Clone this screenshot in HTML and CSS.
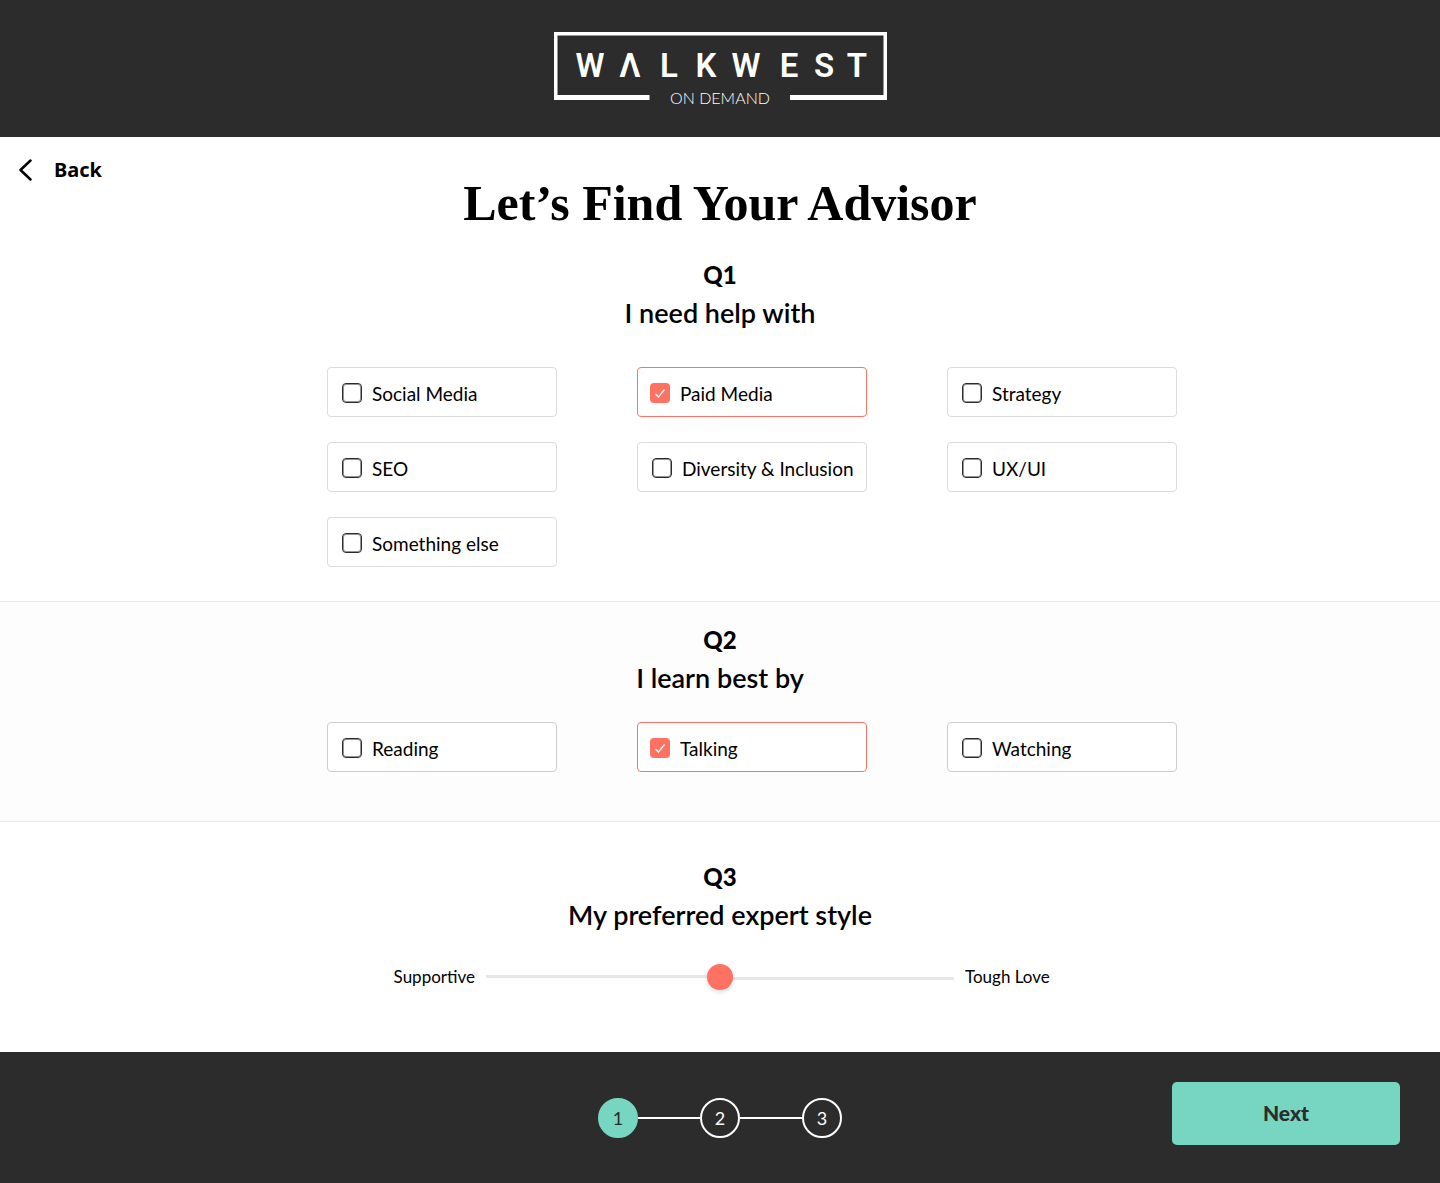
FILE: index.html
```html
<!DOCTYPE html>
<html lang="en">
<head>
<meta charset="utf-8">
<title>Walk West On Demand - Find Your Advisor</title>
<meta name="viewport" content="width=device-width">
<link rel="stylesheet" href="styles.css">
</head>
<body>
<header class="header">
  <svg class="logo" width="333" height="74" viewBox="0 0 333 74" role="img" aria-label="Walk West On Demand">
    <path d="M0 0H333V68H236V63H329.500V3.500H3.500V63H95.500V68H0Z" fill="#fff"/>
    <text class="logo-name" y="45" x="36 76 115 152 192 235 270 303">WΛLKWEST</text>
    <text class="logo-tag" y="72" x="166">ON DEMAND</text>
  </svg>
</header>

<form class="quiz">
  <section class="question">
    <div class="intro">
      <a class="back" href="#">
        <svg width="14" height="22" viewBox="0 0 14 22" aria-hidden="true">
          <path d="M11.500 1.500L1.500 11L11.500 20.500" fill="none" stroke="#000" stroke-width="2.500" stroke-linecap="round" stroke-linejoin="round"/>
        </svg>
        Back
      </a>
      <h1 class="title">Let’s Find Your Advisor</h1>
    </div>
    <h2 class="number">Q1</h2>
    <p class="prompt">I need help with</p>
    <div class="options">
      <label class="option"><input type="checkbox" name="help">Social Media</label>
      <label class="option"><input type="checkbox" name="help" checked>Paid Media</label>
      <label class="option"><input type="checkbox" name="help">Strategy</label>
      <label class="option"><input type="checkbox" name="help">SEO</label>
      <label class="option"><input type="checkbox" name="help">Diversity &amp; Inclusion</label>
      <label class="option"><input type="checkbox" name="help">UX/UI</label>
      <label class="option"><input type="checkbox" name="help">Something else</label>
    </div>
  </section>

  <section class="question question-alt">
    <h2 class="number">Q2</h2>
    <p class="prompt">I learn best by</p>
    <div class="options">
      <label class="option"><input type="checkbox" name="learn">Reading</label>
      <label class="option"><input type="checkbox" name="learn" checked>Talking</label>
      <label class="option"><input type="checkbox" name="learn">Watching</label>
    </div>
  </section>

  <section class="question question-style">
    <h2 class="number">Q3</h2>
    <p class="prompt" id="style-prompt">My preferred expert style</p>
    <div class="scale">
      <label class="scale-low" for="style">Supportive</label>
      <input class="slider" type="range" id="style" min="0" max="100" value="50" aria-labelledby="style-prompt">
      <label for="style">Tough Love</label>
    </div>
  </section>

  <footer class="footer">
    <ol class="steps">
      <li class="step step-active">1</li>
      <li class="step">2</li>
      <li class="step">3</li>
    </ol>
    <button class="next" type="submit">Next</button>
  </footer>
</form>
</body>
</html>
```
FILE: styles.css
```css
* {
  box-sizing: border-box;
}
body {
  margin: 0;
  font-family: Lato, "Open Sans", sans-serif;
  font-size: 19px;
  color: #000;
  background: #fff;
}
h1, h2, p, ol {
  margin: 0;
  padding: 0;
}

/* header */
.header {
  display: flex;
  justify-content: center;
  padding: 32px 20px 31px;
  background: #2c2c2c;
}
.logo {
  display: block;
}
.logo-name, .logo-tag {
  fill: #fff;
  text-anchor: middle;
}
.logo-name {
  font-family: Roboto, sans-serif;
  font-size: 33px;
  font-weight: 600;
}
.logo-tag {
  font-size: 16px;
  font-weight: 300;
}

/* questions */
.intro {
  display: grid;
  grid-template-columns: 1fr auto 1fr;
  align-items: start;
  padding: 18px 19px 0;
}
.back {
  display: flex;
  align-items: center;
  justify-self: start;
  gap: 21px;
  font-family: "Noto Sans", sans-serif;
  font-size: 20px;
  font-weight: 700;
  line-height: 30px;
  color: #000;
  text-decoration: none;
}
.title {
  padding-top: 18px;
  font-family: "Liberation Serif", serif;
  font-size: 50px;
  font-weight: 700;
  line-height: 60px;
}
.question {
  padding-bottom: 34px;
  border-bottom: 1px solid #e9e9e9;
}
.question-alt {
  padding: 20px 0 49px;
  background: #fdfdfd;
}
.question-style {
  padding: 37px 0 60px;
  border-bottom: 0;
}
.number {
  font-size: 24px;
  font-weight: 900;
  line-height: 36px;
  text-align: center;
}
.intro + .number {
  margin-top: 24px;
}
.prompt {
  font-size: 27px;
  font-weight: 600;
  line-height: 40px;
  text-align: center;
}
.options {
  display: grid;
  grid-template-columns: repeat(3, 1fr);
  gap: 25px 80px;
  max-width: 914px;
  margin: 24px auto 0;
  padding-left: 64px;
}
.intro ~ .options {
  margin-top: 34px;
}
.option {
  display: flex;
  align-items: center;
  gap: 10px;
  height: 50px;
  padding: 2px 8px 0 14px;
  border: 1px solid #dcdcdc;
  border-radius: 4px;
  background: #fff;
  white-space: nowrap;
}
.question-alt .option {
  border-color: #cecece;
}
.option input {
  appearance: none;
  flex: none;
  width: 20px;
  height: 20px;
  margin: 0;
  border: 1px solid #2c2c2c;
  border-radius: 4px;
  box-shadow: inset 0 0 0 1px #959595;
}
.option:has(:checked), .question-alt .option:has(:checked) {
  padding-left: 12px;
  border-color: #ff7262;
}
.option input:checked {
  border: 0;
  background: #ff7262 url("data:image/svg+xml,%3Csvg xmlns='http://www.w3.org/2000/svg' viewBox='0 0 20 20'%3E%3Cpath d='M5.5 11L8.500 14L14.500 6.500' fill='none' stroke='white' stroke-width='1.300'/%3E%3C/svg%3E") center / 20px;
  box-shadow: none;
}

/* slider */
.scale {
  display: grid;
  grid-template-columns: 1fr minmax(120px, 468px) 1fr;
  align-items: center;
  gap: 11px;
  margin-top: 27px;
  font-size: 17px;
  line-height: 28px;
}
.scale-low {
  text-align: right;
}
.slider {
  appearance: none;
  width: 100%;
  height: 30px;
  margin: 0;
  background: none;
}
.slider::-webkit-slider-runnable-track {
  height: 26px;
  background:
    linear-gradient(#e7e7e7, #e7e7e7) 0 11px / 50% 3px no-repeat,
    linear-gradient(#e7e7e7, #e7e7e7) 100% 13px / 50% 3px no-repeat;
}
.slider::-webkit-slider-thumb {
  appearance: none;
  width: 26px;
  height: 26px;
  border-radius: 50%;
  background: #ff7262;
  box-shadow: 0 2px 4px rgba(0, 0, 0, 0.15);
}

/* footer */
.footer {
  display: grid;
  grid-template-columns: 1fr auto 1fr;
  align-items: start;
  padding: 30px 40px 38px;
  background: #2c2c2c;
}
.steps {
  grid-column: 2;
  display: flex;
  gap: 62px;
  padding-top: 16px;
  list-style: none;
}
.step {
  position: relative;
  width: 40px;
  height: 40px;
  border: 2px solid #fff;
  border-radius: 50%;
  color: #fff;
  font-size: 18px;
  line-height: 37px;
  text-align: center;
}
.step + .step::before {
  content: "";
  position: absolute;
  top: 17px;
  right: 38px;
  width: 62px;
  height: 2px;
  background: #fff;
}
.step-active {
  border-color: #76d6c1;
  background: #76d6c1;
  color: #2c2c2c;
}
.next {
  justify-self: end;
  width: 228px;
  height: 63px;
  padding-bottom: 3px;
  border: 0;
  border-radius: 5px;
  background: #76d6c1;
  color: #2c2c2c;
  font-family: inherit;
  font-size: 21px;
  font-weight: 900;
}
```
